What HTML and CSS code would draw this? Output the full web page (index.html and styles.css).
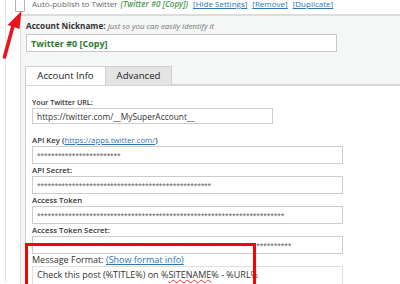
FILE: index.html
```html
<!DOCTYPE html>
<html lang="en">
<head>
    <meta charset="UTF-8">
    <meta name="viewport" content="width=device-width, initial-scale=1.0">
    <title>Twitter Account Settings</title>
    <link rel="stylesheet" href="styles.css">
</head>
<body>
    <div class="screen">
        <div class="rail">
            <!-- Account header row -->
            <div class="head">
                <span class="check"></span>
                <span class="head-title">Auto-publish to Twitter</span>
                <span class="head-name">(Twitter #0 [Copy])</span>
                <a href="#" class="head-link">[Hide Settings]</a>
                <a href="#" class="head-link">[Remove]</a>
                <a href="#" class="head-link">[Duplicate]</a>
            </div>

            <!-- Account settings panel -->
            <div class="panel">
                <div class="nick-label"><b>Account Nickname:</b> <i>Just so you can easily identify it</i></div>
                <input type="text" class="nick" value="Twitter #0 [Copy]">

                <div class="tabs-wrap">
                    <div class="tabs">
                        <span class="tab active">Account Info</span>
                        <span class="tab">Advanced</span>
                    </div>
                    <div class="tab-body">
                        <label class="small-label">Your Twitter URL:</label>
                        <input type="text" class="field short" value="https://twitter.com/__MySuperAccount__">

                        <label class="label first">API Key (<a href="#">https://apps.twitter.com/</a>)</label>
                        <input type="text" class="field stars" value="************************">

                        <label class="label">API Secret:</label>
                        <input type="text" class="field stars" value="**************************************************">

                        <label class="label">Access Token</label>
                        <input type="text" class="field stars" value="***********************************************************************">

                        <label class="label">Access Token Secret:</label>
                        <input type="text" class="field stars" value="*************************************************************************">

                        <label class="label big">Message Format: <a href="#">(Show format info)</a></label>
                        <div class="message">Check this post (%TITLE%) on %<span class="typo">SITENAME</span>% - %URL%</div>
                    </div>
                </div>
            </div>
        </div>

        <!-- Screenshot annotations -->
        <div class="highlight"></div>
        <svg class="arrow" width="30" height="64" viewBox="0 0 30 64">
            <line x1="4.5" y1="57" x2="13.5" y2="24" stroke="#e8161c" stroke-width="3.6" stroke-linecap="round"/>
            <polygon points="21.5,11 7.5,25 19.5,29" fill="#e8161c"/>
        </svg>
    </div>
</body>
</html>
```

FILE: styles.css
```css
body {
    margin: 0;
    background: #fff;
    font-family: 'Open Sans', 'Noto Sans', sans-serif;
    color: #333;
}
.screen {
    position: relative;
    width: 400px;
    height: 284px;
    overflow: hidden;
}
.rail {
    margin-left: 5px;
    border-left: 1px solid #e2e2e2;
    height: 100%;
}
.head {
    display: flex;
    align-items: flex-start;
    gap: 3px;
    font-size: 8px;
    line-height: 12px;
    margin-top: -2px;
    height: 16px;
    color: #666;
    white-space: nowrap;
}
.check {
    width: 8px;
    height: 13px;
    margin-top: -1px;
    margin-left: 9px;
    margin-right: 4px;
    border: 1px solid #b4b4b4;
    border-radius: 1px;
    background: #fff;
    flex: none;
}
.head-name {
    font-style: italic;
    font-weight: 600;
    color: #4b9a4b;
}
.head-link {
    color: #2a76b8;
    margin-left: 2px;
}
.panel {
    margin-left: 14px;
    border-top: 2px solid #dcdcdc;
    border-left: 1px solid #dedede;
    background: #f5f6f6;
    padding: 4px 0 0 5px;
    height: 100%;
}
.nick-label {
    font-size: 8.2px;
    line-height: 12px;
    height: 14px;
    white-space: nowrap;
}
.nick-label i {
    color: #777;
    font-size: 7.8px;
}
input {
    display: block;
    box-sizing: border-box;
    margin: 0;
    font-family: inherit;
    color: #333;
    background: #fff;
    outline: none;
}
.nick {
    width: 311px;
    height: 18px;
    border: 1px solid #c8c8c8;
    padding: 0 4px;
    font-size: 9px;
    font-weight: 700;
    color: #2d7a2d;
}
.tabs-wrap {
    margin-top: 14px;
    margin-left: -1px;
}
.tabs {
    display: flex;
    height: 18px;
    border-bottom: 2px solid #d6d6d6;
}
.tab {
    box-sizing: border-box;
    height: 19px;
    padding-top: 2px;
    font-size: 9.6px;
    line-height: 14px;
    text-align: center;
    border: 1px solid #cfcfcf;
    border-bottom: none;
    color: #222;
}
.tab.active {
    width: 81px;
    background: #fff;
}
.tab:not(.active) {
    width: 67px;
    margin-left: -1px;
    background: #e4e4e4;
}
.tab-body {
    background: #fff;
    border-left: 1px solid #cfcfcf;
    padding: 10px 0 0 6px;
    height: 100%;
}
label {
    display: block;
    height: 12px;
    line-height: 12px;
    white-space: nowrap;
}
.small-label {
    font-size: 7.2px;
    font-weight: 600;
}
.label {
    font-size: 7.8px;
    font-weight: 600;
}
.label.first {
    margin-top: 10px;
}
.label.big {
    font-size: 9px;
    font-weight: 400;
}
.label a {
    color: #2a76b8;
    font-weight: 400;
}
.field {
    width: 311px;
    height: 18px;
    border: 1px solid #cdcdcd;
    padding: 0 4px;
    font-size: 8.4px;
}
.field.short {
    width: 241px;
    height: 16px;
}
.stars {
    font-size: 6.6px;
    letter-spacing: -0.15px;
    color: #555;
}
.message {
    box-sizing: border-box;
    width: 311px;
    height: 40px;
    border: 1px solid #e0e0e0;
    padding: 1px 4px;
    font-size: 9px;
    line-height: 14px;
}
.typo {
    text-decoration: underline wavy #e33;
    text-decoration-thickness: 1px;
}
.highlight {
    position: absolute;
    left: 25px;
    top: 243px;
    width: 225px;
    height: 60px;
    border: 3px solid #f00;
}
.arrow {
    position: absolute;
    left: 0;
    top: 0;
}
```
